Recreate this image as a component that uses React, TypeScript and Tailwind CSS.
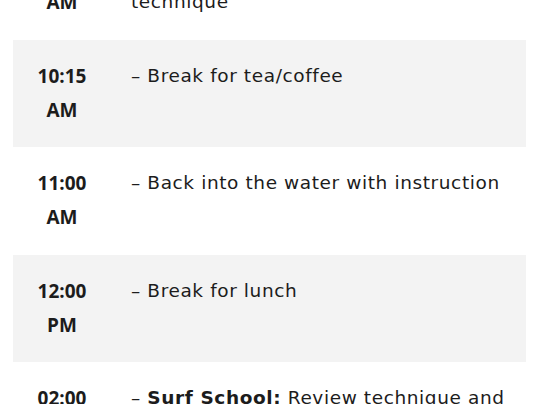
const rows = [
  { time: ["09:30", "AM"], lead: "Surf School:", text: "Lesson on basic technique" },
  { time: ["10:15", "AM"], text: "Break for tea/coffee" },
  { time: ["11:00", "AM"], text: "Back into the water with instruction" },
  { time: ["12:00", "PM"], text: "Break for lunch" },
  { time: ["02:00", "PM"], lead: "Surf School:", text: "Review technique and practice" },
];

export default function App() {
  return (
    <div className="h-[404px] w-[540px] overflow-hidden bg-white text-[#1c1c1c] [font-family:'DejaVu_Sans',sans-serif]">
      <div className="mx-[13px] mt-[-68px] w-[513px]">
        {rows.map((row, i) => (
          <div
            key={i}
            className={`flex h-[107.5px] py-[19px] text-[18.5px] leading-[34px] tracking-[0.6px] ${
              i % 2 === 1 ? "bg-[#f3f3f3]" : "bg-white"
            }`}
          >
            <div className="w-[98px] shrink-0 text-center font-bold [font-family:'Open_Sans',sans-serif] text-[19px] tracking-normal">
              <div>{row.time[0]}</div>
              <div>{row.time[1]}</div>
            </div>
            <div className="flex-1 pl-[20px] pr-[16px]">
              –{" "}
              {row.lead && <span className="font-bold">{row.lead}</span>}
              {row.lead ? " " : ""}
              {row.text}
            </div>
          </div>
        ))}
      </div>
    </div>
  );
}
